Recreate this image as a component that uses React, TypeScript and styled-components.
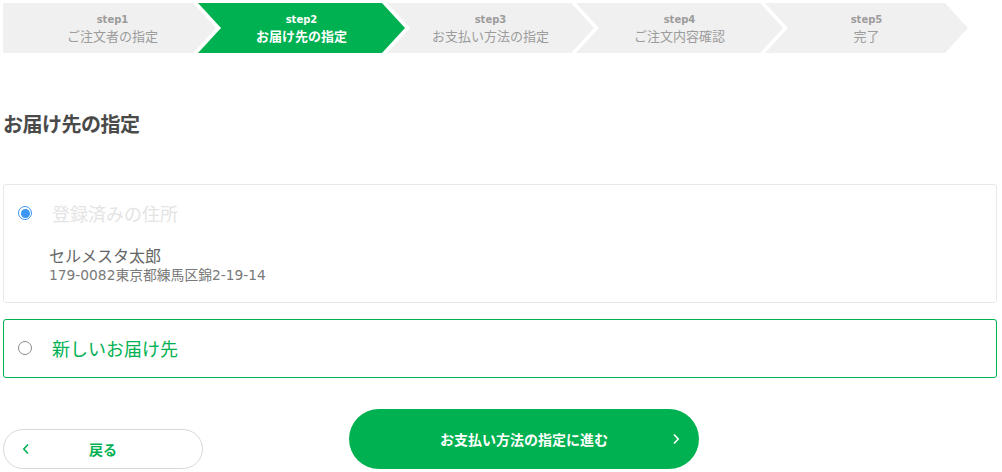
import React from "react";
import styled, { createGlobalStyle, css } from "styled-components";

const GREEN = "#00b151";

const Global = createGlobalStyle`
  html, body { margin: 0; padding: 0; background: #fff; }
  body { font-family: "Noto Sans CJK JP", "Noto Sans", sans-serif; }
  * { box-sizing: border-box; }
`;

const Page = styled.div`
  padding: 3px 5px 0 3px;
  display: flex;
  flex-direction: column;
`;

const StepBar = styled.ol`
  display: flex;
  list-style: none;
  margin: 0;
  padding: 0;
  height: 50px;
`;

const Step = styled.li<{ $active?: boolean; $first?: boolean; $w: number }>`
  flex: none;
  width: ${(p) => p.$w}px;
  height: 50px;
  margin-left: ${(p) => (p.$first ? 0 : -18)}px;
  padding-left: ${(p) => (p.$first ? 6 : 0)}px;
  background: ${(p) => (p.$active ? GREEN : "#f0f0f0")};
  color: ${(p) => (p.$active ? "#fff" : "#9c9c9c")};
  display: flex;
  flex-direction: column;
  align-items: center;
  justify-content: center;
  ${(p) =>
    p.$first
      ? css`
          clip-path: polygon(0 0, calc(100% - 23px) 0, 100% 50%, calc(100% - 23px) 100%, 0 100%);
        `
      : css`
          clip-path: polygon(0 0, calc(100% - 23px) 0, 100% 50%, calc(100% - 23px) 100%, 0 100%, 23px 50%);
        `}
`;

const StepNo = styled.span`
  font-family: "DejaVu Sans", "Noto Sans CJK JP", sans-serif;
  font-size: 10px;
  font-weight: 700;
  line-height: 14px;
`;

const StepLabel = styled.span<{ $active?: boolean }>`
  font-size: 13px;
  line-height: 17px;
  font-weight: ${(p) => (p.$active ? 700 : 400)};
`;

const Heading = styled.h2`
  margin: 57px 0 0;
  font-size: 20px;
  line-height: 28px;
  font-weight: 700;
  color: #4a4a4a;
  letter-spacing: -0.5px;
`;

const Panel = styled.label<{ $selected?: boolean; $top: number }>`
  display: block;
  margin-top: ${(p) => p.$top}px;
  border: 1px solid ${(p) => (p.$selected ? GREEN : "#e8e8e8")};
  border-radius: 3px;
  padding: ${(p) => (p.$selected ? "16px 0 17px 14px" : "16px 0 18px 14px")};
`;

const OptionRow = styled.div`
  display: flex;
  align-items: center;
  gap: 20px;
  height: 24px;
`;

const Radio = styled.span<{ $checked?: boolean }>`
  flex: none;
  width: 14px;
  height: 14px;
  border-radius: 50%;
  border: 1px solid ${(p) => (p.$checked ? "#3b95f5" : "#8a8a8a")};
  background: #fff;
  position: relative;
  ${(p) =>
    p.$checked &&
    css`
      border-width: 1.5px;
      &::after {
        content: "";
        position: absolute;
        inset: 1.5px;
        border-radius: 50%;
        background: #3b95f5;
      }
    `}
`;

const OptionText = styled.span<{ $color: string }>`
  font-size: 18px;
  line-height: 24px;
  color: ${(p) => p.$color};
`;

const Address = styled.div`
  margin: 20px 0 0 31px;
  display: flex;
  flex-direction: column;
`;

const Name = styled.span`
  font-size: 16px;
  line-height: 21px;
  color: #666;
`;

const AddrLine = styled.span`
  font-family: "DejaVu Sans", "Noto Sans CJK JP", sans-serif;
  font-size: 13.8px;
  line-height: 18px;
  color: #7a7a7a;
`;

const Actions = styled.div`
  margin-top: 31px;
  display: flex;
  align-items: flex-end;
  gap: 146px;
`;

const Button = styled.button<{ $primary?: boolean }>`
  position: relative;
  font-family: inherit;
  font-weight: 700;
  font-size: 14px;
  cursor: pointer;
  display: flex;
  align-items: center;
  justify-content: center;
  ${(p) =>
    p.$primary
      ? css`
          width: 350px;
          height: 60px;
          border-radius: 30px;
          border: none;
          background: ${GREEN};
          color: #fff;
        `
      : css`
          width: 200px;
          height: 40px;
          border-radius: 20px;
          border: 1px solid #d8d8d8;
          background: #fff;
          color: ${GREEN};
        `}
`;

const Chevron = styled.svg<{ $side: "left" | "right" }>`
  position: absolute;
  top: 50%;
  transform: translateY(-50%);
  ${(p) => (p.$side === "left" ? "left: 18px;" : "right: 19px;")}
`;

const steps = [
  { no: "step1", label: "ご注文者の指定", w: 213 },
  { no: "step2", label: "お届け先の指定", w: 207, active: true },
  { no: "step3", label: "お支払い方法の指定", w: 207 },
  { no: "step4", label: "ご注文内容確認", w: 207 },
  { no: "step5", label: "完了", w: 203 },
];

export default function App() {
  return (
    <>
      <Global />
      <Page>
        <StepBar>
          {steps.map((s, i) => (
            <Step key={s.no} $active={s.active} $first={i === 0} $w={s.w}>
              <StepNo>{s.no}</StepNo>
              <StepLabel $active={s.active}>{s.label}</StepLabel>
            </Step>
          ))}
        </StepBar>
        <Heading>お届け先の指定</Heading>
        <Panel $top={46}>
          <OptionRow>
            <Radio $checked />
            <OptionText $color="#e4e4e4">登録済みの住所</OptionText>
          </OptionRow>
          <Address>
            <Name>セルメスタ太郎</Name>
            <AddrLine>179-0082東京都練馬区錦2-19-14</AddrLine>
          </Address>
        </Panel>
        <Panel $top={16} $selected>
          <OptionRow>
            <Radio />
            <OptionText $color={GREEN}>新しいお届け先</OptionText>
          </OptionRow>
        </Panel>
        <Actions>
          <Button>
            <Chevron $side="left" width="8" height="12" viewBox="0 0 8 12">
              <polyline points="6,1.5 1.8,6 6,10.5" fill="none" stroke={GREEN} strokeWidth="1.6" />
            </Chevron>
            戻る
          </Button>
          <Button $primary>
            お支払い方法の指定に進む
            <Chevron $side="right" width="8" height="12" viewBox="0 0 8 12">
              <polyline points="2,1.5 6.2,6 2,10.5" fill="none" stroke="#fff" strokeWidth="1.6" />
            </Chevron>
          </Button>
        </Actions>
      </Page>
    </>
  );
}
